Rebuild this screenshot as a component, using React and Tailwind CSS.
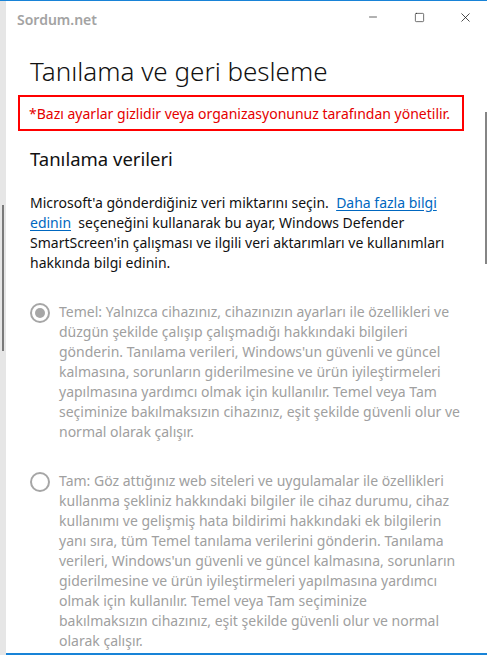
import { Minus, Square, X } from 'lucide-react';

const Radio = ({ checked }) => (
  <div className="mt-[1px] w-5 h-5 shrink-0 rounded-full border-2 border-[#a6a6a6] flex items-center justify-center">
    {checked && <div className="w-[10px] h-[10px] rounded-full bg-[#a6a6a6]" />}
  </div>
);

const Option = ({ checked, children }) => (
  <div className="flex gap-[9px] items-start">
    <Radio checked={checked} />
    <p className="text-[14px] leading-[20px] text-[#a0a0a0]">{children}</p>
  </div>
);

export default function App() {
  return (
    <div
      className="w-[487px] h-[655px] overflow-hidden flex border-t border-[#1883d7] bg-white"
      style={{ fontFamily: '"Noto Sans", "Open Sans", sans-serif' }}
    >
      {/* background window edge */}
      <div className="w-[6px] shrink-0 bg-[#e6e6e6] flex flex-col pt-[204px]">
        <div className="ml-[2px] w-[2px] h-[146px] bg-[#7a7a7a]" />
      </div>

      <div className="relative flex-1 flex flex-col border-r-2 border-b-2 border-[#1883d7] bg-white">
        <div className="absolute right-[1px] top-[111px] w-[2px] h-[152px] bg-[#858585]" />

        {/* title bar */}
        <div className="h-[36px] flex items-start justify-between">
          <span className="pl-[11px] pt-[8px] text-[14px] font-semibold text-[#a3a3a3]">Sordum.net</span>
          <div className="flex text-[#111]">
            <div className="w-[46px] h-[32px] flex items-center justify-center">
              <Minus size={12} strokeWidth={1.3} />
            </div>
            <div className="w-[46px] h-[32px] flex items-center justify-center">
              <Square size={11} strokeWidth={1.3} />
            </div>
            <div className="w-[46px] h-[32px] flex items-center justify-center">
              <X size={15} strokeWidth={1.2} />
            </div>
          </div>
        </div>

        <div className="pl-[24px] pr-[24px]">
          <h1 className="mt-[16px] text-[26px] leading-[36px] font-light text-[#111]">Tanılama ve geri besleme</h1>

          <div className="-ml-[12px] mt-[6px] w-[446px] h-[36px] border-2 border-[#ff0000] flex items-center pl-[9px]">
            <span className="text-[14px] text-[#e50000]">*Bazı ayarlar gizlidir veya organizasyonunuz tarafından yönetilir.</span>
          </div>

          <h2 className="mt-[14px] text-[18.5px] leading-[28px] text-[#111]">Tanılama verileri</h2>

          <p className="mt-[20px] text-[14px] leading-[20px] text-[#111]">
            Microsoft'a gönderdiğiniz veri miktarını seçin.{'\u00a0 '}
            <a className="text-[#0067c0] underline underline-offset-2">Daha fazla bilgi edinin</a>{'\u00a0 '}
            seçeneğini kullanarak bu ayar, Windows Defender SmartScreen'in çalışması ve ilgili veri aktarımları ve kullanımları hakkında bilgi edinin.
          </p>

          <div className="mt-[29px] flex flex-col gap-[29px]">
            <Option checked>
              Temel: Yalnızca cihazınız, cihazınızın ayarları ile özellikleri ve düzgün şekilde çalışıp çalışmadığı hakkındaki bilgileri gönderin. Tanılama verileri, Windows'un güvenli ve güncel kalmasına, sorunların giderilmesine ve ürün iyileştirmeleri yapılmasına yardımcı olmak için kullanılır. Temel veya Tam seçiminize bakılmaksızın cihazınız, eşit şekilde güvenli olur ve normal olarak çalışır.
            </Option>
            <Option>
              Tam: Göz attığınız web siteleri ve uygulamalar ile özellikleri kullanma şekliniz hakkındaki bilgiler ile cihaz durumu, cihaz kullanımı ve gelişmiş hata bildirimi hakkındaki ek bilgilerin yanı sıra, tüm Temel tanılama verilerini gönderin. Tanılama verileri, Windows'un güvenli ve güncel kalmasına, sorunların giderilmesine ve ürün iyileştirmeleri yapılmasına yardımcı olmak için kullanılır. Temel veya Tam seçiminize
              <br />
              <span className="whitespace-nowrap">bakılmaksızın cihazınız, eşit şekilde güvenli olur ve normal</span>
              <br />
              olarak çalışır.
            </Option>
          </div>
        </div>
      </div>
    </div>
  );
}
